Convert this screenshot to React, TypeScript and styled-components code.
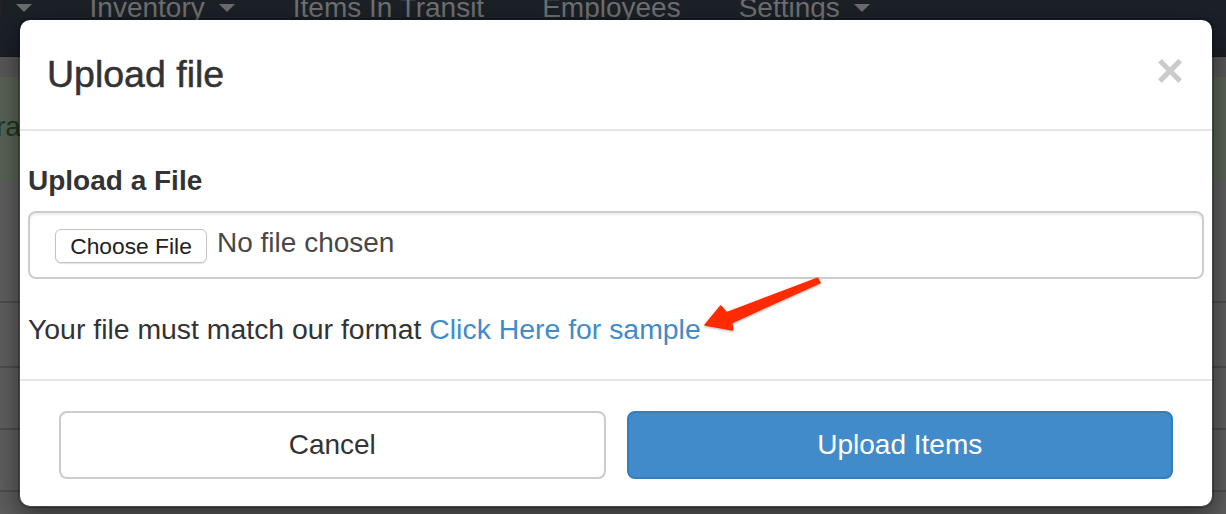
import React from "react";
import styled, { createGlobalStyle } from "styled-components";

const GlobalStyle = createGlobalStyle`
  html, body {
    margin: 0;
    padding: 0;
    width: 1226px;
    height: 514px;
    overflow: hidden;
    font-family: "Liberation Sans", Arial, Helvetica, sans-serif;
  }
  * { box-sizing: border-box; }
`;

const Page = styled.div`
  position: relative;
  width: 1226px;
  height: 514px;
  overflow: hidden;
  background: #5f5f5f;
  display: flex;
  flex-direction: column;
`;

const Navbar = styled.nav`
  height: 57px;
  flex: none;
  background: #1c2128;
  display: flex;
  align-items: flex-start;
  gap: 58px;
  margin-left: -14px;
  border-bottom: 1px solid #171b20;
`;

const NavItem = styled.div`
  display: flex;
  align-items: center;
  gap: 14px;
  margin-top: -12px;
  height: 40px;
  font-size: 28px;
  line-height: 40px;
  color: #717171;
  white-space: nowrap;
`;

const Caret = styled.span`
  display: inline-block;
  width: 0;
  height: 0;
  border-left: 8px solid transparent;
  border-right: 8px solid transparent;
  border-top: 8px solid #6e6e6e;
`;

const SubBar = styled.div`
  height: 20px;
  flex: none;
  background: #5a5a5a;
`;

const Alert = styled.div`
  height: 103px;
  flex: none;
  background: #5b6657;
  color: #1d3a1d;
  font-size: 28px;
  line-height: 40px;
  padding-top: 30px;
  margin-left: -4px;
`;

const Row = styled.div<{ $h: number }>`
  height: ${(p) => p.$h}px;
  flex: none;
  border-bottom: 2px solid #4f4f4f;
  background: #616161;
`;

const Modal = styled.div`
  position: absolute;
  left: 18px;
  top: 18px;
  width: 1196px;
  height: 490px;
  background: #fff;
  border: 2px solid rgba(0, 0, 0, 0.25);
  border-radius: 12px;
  box-shadow: 0 10px 30px rgba(0, 0, 0, 0.5);
  display: flex;
  flex-direction: column;
  background-clip: padding-box;
`;

const Header = styled.div`
  display: flex;
  justify-content: space-between;
  align-items: flex-start;
  padding: 34px 28px 34px 27px;
  border-bottom: 2px solid #e5e5e5;
`;

const Title = styled.h4`
  margin: 0;
  font-size: 37.5px;
  line-height: 40px;
  font-weight: 400;
  color: #333;
  -webkit-text-stroke: 0.5px #333;
`;

const Close = styled.button`
  border: 0;
  background: transparent;
  padding: 0;
  margin-top: -7px;
  font-family: "Liberation Sans", Arial, sans-serif;
  font-size: 48px;
  line-height: 1;
  font-weight: 700;
  color: #000;
  opacity: 0.2;
  cursor: pointer;
`;

const Body = styled.div`
  padding: 30px 8px 30px 8px;
  color: #333;
  font-size: 28.4px;
  line-height: 40px;
`;

const Label = styled.label`
  display: block;
  font-weight: 700;
  font-size: 28px;
  margin-bottom: 10px;
`;

const FileField = styled.div`
  height: 68px;
  border: 2px solid #cccccc;
  border-radius: 8px;
  box-shadow: inset 0 2px 2px rgba(0, 0, 0, 0.075);
  display: flex;
  align-items: center;
  gap: 10px;
  padding-left: 25px;
  margin-bottom: 30px;
`;

const ChooseButton = styled.span`
  display: inline-flex;
  align-items: center;
  justify-content: center;
  width: 152px;
  height: 34px;
  margin-top: 2px;
  border: 1px solid #c4c4c4;
  border-radius: 6px;
  background: #fff;
  box-shadow: 0 1px 1px rgba(0, 0, 0, 0.12);
  font-size: 22.8px;
  color: #222;
`;

const NoFile = styled.span`
  font-size: 28px;
  color: #484848;
  margin-top: -5px;
`;

const Paragraph = styled.p`
  margin: 0;
`;

const Link = styled.a`
  color: #428bca;
  text-decoration: none;
`;

const Footer = styled.div`
  border-top: 2px solid #e5e5e5;
  padding: 30px 39px;
  display: grid;
  grid-template-columns: 1fr 1fr;
  gap: 21px;
`;

const Button = styled.button<{ $primary?: boolean }>`
  height: 68px;
  border-radius: 8px;
  font-family: "Liberation Sans", Arial, sans-serif;
  font-size: 28px;
  border: 2px solid ${(p) => (p.$primary ? "#357ebd" : "#cccccc")};
  background: ${(p) => (p.$primary ? "#428bca" : "#ffffff")};
  color: ${(p) => (p.$primary ? "#ffffff" : "#333333")};
  cursor: pointer;
`;

const Arrow = styled.svg`
  position: absolute;
  left: 700px;
  top: 270px;
  overflow: visible;
`;

export default function App() {
  return (
    <>
      <GlobalStyle />
      <Page>
        <Navbar>
          <NavItem>
            g<Caret />
          </NavItem>
          <NavItem>
            Inventory<Caret />
          </NavItem>
          <NavItem>Items In Transit</NavItem>
          <NavItem>Employees</NavItem>
          <NavItem>
            Settings<Caret />
          </NavItem>
        </Navbar>
        <SubBar />
        <Alert>ra</Alert>
        <Row $h={123} />
        <Row $h={65} />
        <Row $h={62} />
        <Row $h={62} />

        <Modal>
          <Header>
            <Title>Upload file</Title>
            <Close aria-label="Close">×</Close>
          </Header>
          <Body>
            <Label>Upload a File</Label>
            <FileField>
              <ChooseButton>Choose File</ChooseButton>
              <NoFile>No file chosen</NoFile>
            </FileField>
            <Paragraph>
              Your file must match our format <Link href="#">Click Here for sample</Link>
            </Paragraph>
          </Body>
          <Footer>
            <Button>Cancel</Button>
            <Button $primary>Upload Items</Button>
          </Footer>
        </Modal>

        <Arrow width="130" height="70" viewBox="0 0 130 70">
          <defs>
            <filter id="sh" x="-20%" y="-20%" width="140%" height="140%">
              <feDropShadow dx="0" dy="1" stdDeviation="1" floodColor="#000" floodOpacity="0.3" />
            </filter>
          </defs>
          <polygon
            filter="url(#sh)"
            fill="#ff2a00"
            strokeLinejoin="round"
            stroke="#ff2a00"
            strokeWidth="1.5"
            points="117.7,8.3 120,12.7 31.7,52.7 32.7,60 5,55 20.7,36 26.7,42.7"
          />
        </Arrow>
      </Page>
    </>
  );
}
